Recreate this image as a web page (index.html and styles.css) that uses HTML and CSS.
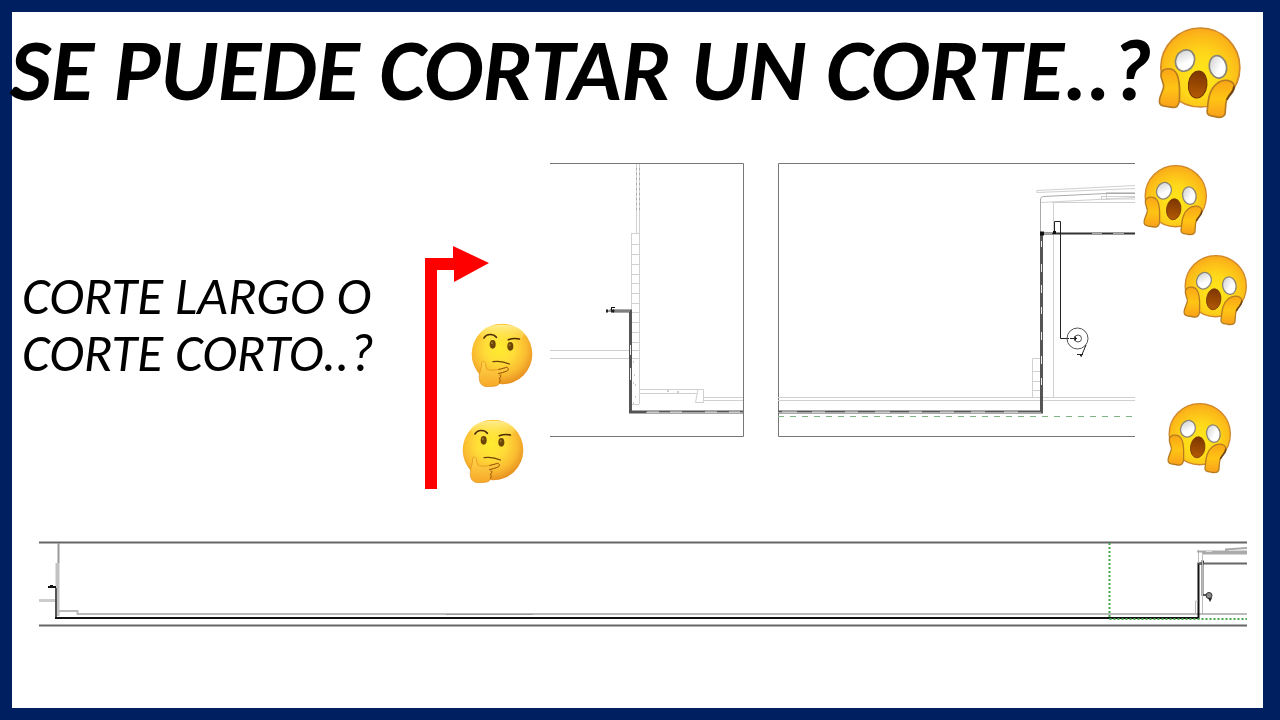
FILE: index.html
```html
<!DOCTYPE html>
<html lang="es">
<head>
<meta charset="utf-8">
<meta name="viewport" content="width=device-width, initial-scale=1">
<title>Se puede cortar un corte</title>
<link rel="stylesheet" href="styles.css">
</head>
<body>
<svg class="defs" aria-hidden="true">
  <defs>
    <radialGradient id="skin" cx="50%" cy="60%" r="62%">
      <stop offset="0" stop-color="#ffe81a"/><stop offset=".45" stop-color="#fed81a"/><stop offset=".8" stop-color="#fcba18"/><stop offset="1" stop-color="#f9a51b"/>
    </radialGradient>
    <linearGradient id="hand" x1="0" y1="0" x2="0" y2="1">
      <stop offset="0" stop-color="#f9a516"/><stop offset=".5" stop-color="#ffc414"/><stop offset="1" stop-color="#f9a01b"/>
    </linearGradient>
    <linearGradient id="eye" x1="0" y1="0" x2="1" y2="1">
      <stop offset="0" stop-color="#c8c9cb"/><stop offset=".6" stop-color="#fff"/>
    </linearGradient>
    <linearGradient id="mouth" x1="0" y1="0" x2="0" y2="1">
      <stop offset="0" stop-color="#7d3500"/><stop offset="1" stop-color="#b25a05"/>
    </linearGradient>
    <radialGradient id="glow" cx="46%" cy="40%" r="62%">
      <stop offset="0" stop-color="#ffec2e"/><stop offset=".4" stop-color="#ffdc38"/><stop offset=".72" stop-color="#fabb31"/><stop offset="1" stop-color="#e58c1e"/>
    </radialGradient>
    <linearGradient id="shine" x1="0" y1="0" x2="0" y2="1">
      <stop offset="0" stop-color="#fff3a0" stop-opacity=".9"/><stop offset="1" stop-color="#ffe93a" stop-opacity="0"/>
    </linearGradient>
    <linearGradient id="palm" x1="0" y1="0" x2="0" y2="1">
      <stop offset="0" stop-color="#ffd54a"/><stop offset="1" stop-color="#f7a928"/>
    </linearGradient>
    <symbol id="scream" viewBox="54 48 252 280">
      <circle cx="181" cy="173" r="119" fill="url(#skin)" stroke="#cf872b" stroke-width="5"/>
      <ellipse cx="135" cy="152" rx="28" ry="33" transform="rotate(25 135 152)" fill="url(#eye)" stroke="#8b8475" stroke-width="5"/>
      <ellipse cx="234" cy="171" rx="26" ry="34" transform="rotate(-12 234 171)" fill="url(#eye)" stroke="#8b8475" stroke-width="5"/>
      <ellipse cx="173" cy="224" rx="28" ry="41" transform="rotate(7 173 224)" fill="url(#mouth)" stroke="#703404" stroke-width="3"/>
      <path d="M63 192C67 173 99 170 110 192C122 215 118 250 118 273C116 290 108 295 97 293L70 289C56 285 56 275 60 262L70 235C74 218 59 207 63 192Z" fill="url(#hand)" stroke="#b67b20" stroke-width="5"/>
      <path d="M202 300C205 275 205 242 230 222C250 205 277 210 283 227C285 243 269 247 261 268C255 285 258 300 255 314C250 323 240 325 225 321C206 318 199 315 202 300Z" fill="url(#hand)" stroke="#b67b20" stroke-width="5"/>
      <path d="M282 232C283 247 270 251 262 268" fill="none" stroke="#6d4310" stroke-width="6" stroke-linecap="round"/>
    </symbol>
    <symbol id="thinking" viewBox="215 280 186 192">
      <circle cx="308" cy="373" r="91" fill="url(#glow)"/>
      <ellipse cx="308" cy="313" rx="66" ry="28" fill="url(#shine)"/>
      <path d="M254 325C262 311 283 312 291 323M327 330Q344 324 360 328" fill="none" stroke="#4d2b04" stroke-width="5" stroke-linecap="round"/>
      <ellipse cx="280" cy="344" rx="9" ry="13" fill="#6b4606"/>
      <ellipse cx="333" cy="350" rx="9" ry="13" fill="#6b4606"/>
      <ellipse cx="278" cy="340" rx="3" ry="4" fill="#9a742c"/>
      <ellipse cx="331" cy="346" rx="3" ry="4" fill="#9a742c"/>
      <path d="M281 396Q306 392 330 403" fill="none" stroke="#6b4306" stroke-width="4" stroke-linecap="round"/>
      <path d="M247 397C253 391 259 397 259 407L262 418C276 426 297 419 322 413C329 413 329 421 323 424L303 431C309 437 305 444 302 446C307 452 304 458 300 459C300 469 284 471 262 471C242 469 239 454 240 437C241 421 249 414 247 397Z" fill="url(#palm)" stroke="#df8b1b" stroke-width="2"/>
      <path d="M296 432Q309 430 323 424C329 421 328 414 322 413L297 420M302 435Q306 441 300 446Q306 453 299 459" fill="none" stroke="#9a5a0a" stroke-width="3"/>
    </symbol>
  </defs>
</svg>
<main class="slide">
  <header class="heading">
    <h1 class="title">SE PUEDE CORTAR UN CORTE..?</h1>
    <svg class="heading-face" role="img" aria-label="Cara gritando"><use href="#scream"/></svg>
  </header>
  <section class="middle">
    <p class="question">CORTE LARGO O<br>CORTE CORTO..?</p>
    <svg class="art" viewBox="425 163 125 327" role="img" aria-label="Flecha de corte y caras pensativas">
      <path d="M425 258H453V246L489 263L454 282V270H437V489H425Z" fill="#f00"/>
      <use href="#thinking" x="471" y="323" width="62" height="64"/>
      <use href="#thinking" x="462" y="419" width="62" height="64"/>
    </svg>
    <svg class="art" viewBox="550 163 585 327" role="img" aria-label="Corte corto interrumpido">
      <g fill="none" stroke="#777" stroke-width="1">
        <path d="M550 163.500H743.500V436.500H550M1135 163.500H778.500V436.500H1135"/>
      </g>
      <g fill="none" stroke="#d0d0d0" stroke-width="1">
        <path d="M636.500 164V233M639.500 164V404M631.500 233.500H639M631.500 233V404.500H639M631.500 244.500H639M631.500 254.500H639M631.500 264.500H639M631.500 274.500H639M631.500 283.500H639M631.500 293.500H639M631.500 303.500H639M631.500 312.500H639M631.500 322.500H639M631.500 332.500H639M631.500 342.500H639"/>
        <path d="M550 350.500H639M550 358.500H639M639 389.500H703.500V402.500H695.500L698 389M639 393.500H697M703 397.500H743M703 400.500H743"/>
        <path d="M778 397.500H1135M778 400.500H1135M1053.500 202V397M1032.500 397V358.500H1041M1032.500 371.500H1041M1032.500 381.500H1041M1032.500 390.500H1041"/>
        <path d="M1037 190.500L1135 185.500M1037 192.500L1135 188.500M1037 190V193M1041 202.500L1135 197.500M1052 202.500H1135M1106 192.500H1135M1101 196.500H1135M1106.500 193V199H1135M1101.500 196V199.500H1110"/>
      </g>
      <path d="M636.500 168V212M639.500 168V212" stroke="#aaa" stroke-dasharray="2 3"/>
      <path d="M633 362h1M634 375h1M635 385h1M633 383h1M635 397h1M633 403h1M667 391h2M677 392h2" stroke="#999"/>
      <path d="M1040.500 412V199Q1041 197 1043 196.500L1106 193.500H1135" fill="none" stroke="#aaa"/>
      <path d="M613 311H630.500V412H743M778 412H1041.500V233" fill="none" stroke="#555" stroke-width="3"/>
      <path d="M613 311H630M646 412.500H743M778 412.500H1041" stroke="#aaa" stroke-width="1"/>
      <path d="M630.500 345V355M630.500 368V380M647 412H659M670 412H682M705 412H717M729 412H740M782 412H797M812 412H825M845 412H858M875 412H890M909 412H922M940 412H954M971 412H985M1004 412H1018M1041.500 241V247M1041.500 264V272M1041.500 285V293M1041.500 307V314M1041.500 332V340M1041.500 356V364M1041.500 378V385" stroke="#eee" stroke-width="1"/>
      <path d="M1041 233.500H1135" stroke="#333" stroke-width="2"/>
      <path d="M1092 233.500H1102M1113 233.500H1124M1044 233.500H1052" stroke="#aaa" stroke-width="1"/>
      <path d="M1054.500 234V221.500H1060.500V338.500H1069M1070 338.500H1077" fill="none" stroke="#222" stroke-width="1"/>
      <path d="M1040 231.500h4v4h-4zM1053 231h3v3h-3zM1074 336.500h2v4h-2zM606 309.500h2v3h-2zM609 309h2v-2h4v1h-3v2zM611 309.500h3v3h-3z" fill="#111"/>
      <path d="M606 311H615" stroke="#333"/>
      <g fill="none" stroke="#555" stroke-width="1">
        <circle cx="1077.500" cy="338.500" r="10.500"/><circle cx="1078" cy="338.500" r="3.500"/>
        <path d="M1086 345L1081 357M1077 354.500H1083M1080 356L1083 353" stroke="#222"/>
      </g>
      <path d="M778 416.500H1135" stroke="#7db385" stroke-width="1" stroke-dasharray="6 6"/>
    </svg>
    <svg class="art" viewBox="1135 163 128 327" role="img" aria-label="Caras gritando">
      <use href="#scream" x="1143" y="164" width="65" height="72"/>
      <use href="#scream" x="1183" y="254" width="65" height="72"/>
      <use href="#scream" x="1167" y="402" width="65" height="72"/>
    </svg>
  </section>
  <svg class="long-section" viewBox="39 541 1208 86" role="img" aria-label="Corte largo completo">
    <g fill="none">
      <path d="M39 542.500H1247M39 625.500H1247" stroke="#666" stroke-width="2"/>
      <path d="M39 600.500H58" stroke="#ccc" stroke-width="3"/>
      <path d="M58.500 543V563" stroke="#999" stroke-width="2"/>
      <path d="M56.500 616V564H58.500V616" stroke="#c2c2c2" stroke-width="2"/>
      <path d="M59 611H77.500V614H1247" stroke="#bbb" stroke-width="2"/>
      <path d="M446 614.500H533" stroke="#999" stroke-width="1"/>
      <path d="M56 588V618" stroke="#555" stroke-width="2"/>
      <path d="M55 618H1198.500V563.500H1203V561" stroke="#111" stroke-width="2"/>
      <path d="M48 587H56M50 586H53" stroke="#111" stroke-width="2"/>
      <path d="M1198.500 563.500H1247" stroke="#666" stroke-width="2"/>
      <path d="M1202.500 560V595H1206" stroke="#555" stroke-width="2"/>
      <path d="M1198.500 550V563M1202.500 555V613M1195.500 613V601H1198" stroke="#bbb"/>
      <path d="M1197 551.500H1247M1202 553.500H1247M1225 549.500L1247 548" stroke="#aaa" stroke-width="2"/>
      <path d="M1206 551.500H1212M1229 550.500H1241" stroke="#ddd"/>
      <path d="M1109.500 543V619H1247" stroke="#44a64b" stroke-width="2" stroke-dasharray="2 2"/>
    </g>
    <circle cx="1209" cy="595.500" r="3" fill="#888" stroke="#333"/>
    <path d="M1208 598L1212 598L1210 602Z" fill="#222"/>
  </svg>
</main>
</body>
</html>
```
FILE: styles.css
```css
* {
  box-sizing: border-box;
}

body {
  margin: 0;
  background: #fff;
  color: #000;
  font-family: Carlito, Lato, "Open Sans", sans-serif;
}

.defs {
  position: absolute;
  width: 0;
  height: 0;
}

.slide {
  min-height: 100vh;
  border: 12px solid #001f60;
  border-right-width: 17px;
  background: #fff;
}

.heading {
  display: flex;
  align-items: flex-start;
  justify-content: space-between;
  padding: 14px 21px 0 0;
  min-height: 151px;
}

.title {
  margin: 0 0 0 -2px;
  font-size: 88px;
  font-style: italic;
  font-weight: 700;
  line-height: 88px;
  white-space: nowrap;
}

.heading-face {
  flex: none;
  width: 84px;
  height: 93px;
}

.middle {
  display: grid;
  grid-template-columns: 413fr 125fr 585fr 128fr;
  align-items: start;
}

.question {
  margin: 0;
  padding: 105px 0 0 10px;
  font-size: 53px;
  font-style: italic;
  line-height: 57px;
  white-space: nowrap;
}

.art {
  display: block;
  width: 100%;
}

.long-section {
  display: block;
  width: auto;
  margin: 51px 16px 0 27px;
}
```
